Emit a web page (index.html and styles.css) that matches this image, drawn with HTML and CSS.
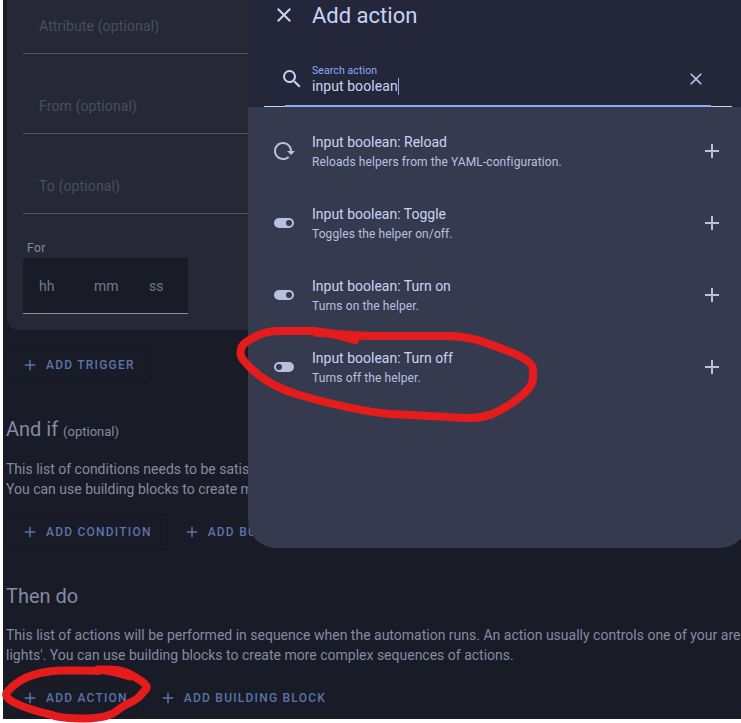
FILE: index.html
```html
<!DOCTYPE html>
<html lang="en">
<head>
<meta charset="utf-8">
<title>Automation editor</title>
<link rel="stylesheet" href="styles.css">
</head>
<body>
<svg class="defs" aria-hidden="true">
  <symbol id="plus" viewBox="0 0 24 24"><path d="M19,13H13V19H11V13H5V11H11V5H13V11H19V13Z"/></symbol>
  <symbol id="close" viewBox="0 0 24 24"><path d="M19,6.41L17.59,5L12,10.59L6.41,5L5,6.41L10.59,12L5,17.59L6.41,19L12,13.41L17.59,19L19,17.59L13.41,12L19,6.41Z"/></symbol>
  <symbol id="magnify" viewBox="0 0 24 24"><path d="M9.5,3A6.5,6.5 0 0,1 16,9.5C16,11.11 15.41,12.59 14.44,13.73L14.71,14H15.5L20.5,19L19,20.5L14,15.5V14.71L13.73,14.44C12.59,15.41 11.11,16 9.5,16A6.5,6.5 0 0,1 3,9.5A6.5,6.5 0 0,1 9.5,3M9.5,5C7,5 5,7 5,9.5C5,12 7,14 9.5,14C12,14 14,12 14,9.5C14,7 12,5 9.5,5Z"/></symbol>
  <symbol id="reload" viewBox="0 0 24 24"><path d="M2 12C2 16.97 6.03 21 11 21C13.39 21 15.68 20.06 17.4 18.4L15.9 16.9C14.63 18.25 12.86 19 11 19C4.76 19 1.64 11.46 6.05 7.05C10.46 2.64 18 5.77 18 12H15L19 16H19.1L23 12H20C20 7.03 15.97 3 11 3C6.03 3 2 7.03 2 12Z"/></symbol>
  <symbol id="switch-on" viewBox="0 0 24 24"><path d="M17,7H7A5,5 0 0,0 2,12A5,5 0 0,0 7,17H17A5,5 0 0,0 22,12A5,5 0 0,0 17,7M17,15A3,3 0 0,1 14,12A3,3 0 0,1 17,9A3,3 0 0,1 20,12A3,3 0 0,1 17,15Z"/></symbol>
  <symbol id="switch-off" viewBox="0 0 24 24"><path d="M17,7H7A5,5 0 0,0 2,12A5,5 0 0,0 7,17H17A5,5 0 0,0 22,12A5,5 0 0,0 17,7M7,15A3,3 0 0,1 4,12A3,3 0 0,1 7,9A3,3 0 0,1 10,12A3,3 0 0,1 7,15Z"/></symbol>
</svg>

<main class="editor">
  <section class="card">
    <div class="field">Attribute (optional)</div>
    <div class="field">From (optional)</div>
    <div class="field">To (optional)</div>
    <div class="for-label">For</div>
    <div class="duration"><span>hh</span><span>mm</span><span>ss</span></div>
  </section>
  <div class="buttons trigger">
    <button class="btn"><svg><use href="#plus"/></svg>ADD TRIGGER</button>
  </div>

  <h2>And if <small>(optional)</small></h2>
  <p>This list of conditions needs to be satisfied for the automation to run.<br>You can use building blocks to create more complex conditions.</p>
  <div class="buttons condition">
    <button class="btn"><svg><use href="#plus"/></svg>ADD CONDITION</button>
    <button class="btn flat"><svg><use href="#plus"/></svg>ADD BUILDING BLOCK</button>
  </div>

  <h2 class="then">Then do</h2>
  <p>This list of actions will be performed in sequence when the automation runs. An action usually controls one of your areas<br>lights'. You can use building blocks to create more complex sequences of actions.</p>
  <div class="buttons">
    <button class="btn"><svg><use href="#plus"/></svg>ADD ACTION</button>
    <button class="btn flat"><svg><use href="#plus"/></svg>ADD BUILDING BLOCK</button>
  </div>
</main>

<div class="dialog" role="dialog">
  <header>
    <div class="title-row"><svg class="icon"><use href="#close"/></svg><h1>Add action</h1></div>
    <div class="search">
      <svg class="icon"><use href="#magnify"/></svg>
      <div class="search-text">
        <span class="search-label">Search action</span>
        <span class="search-value">input boolean<i class="caret"></i></span>
      </div>
      <svg class="clear"><use href="#close"/></svg>
    </div>
  </header>
  <ul>
    <li><svg class="item-icon"><use href="#reload"/></svg><div class="item-text"><b>Input boolean: Reload</b><span>Reloads helpers from the YAML-configuration.</span></div><svg class="item-icon"><use href="#plus"/></svg></li>
    <li><svg class="item-icon"><use href="#switch-on"/></svg><div class="item-text"><b>Input boolean: Toggle</b><span>Toggles the helper on/off.</span></div><svg class="item-icon"><use href="#plus"/></svg></li>
    <li><svg class="item-icon"><use href="#switch-on"/></svg><div class="item-text"><b>Input boolean: Turn on</b><span>Turns on the helper.</span></div><svg class="item-icon"><use href="#plus"/></svg></li>
    <li><svg class="item-icon"><use href="#switch-off"/></svg><div class="item-text"><b>Input boolean: Turn off</b><span>Turns off the helper.</span></div><svg class="item-icon"><use href="#plus"/></svg></li>
  </ul>
</div>

<svg class="marks" viewBox="0 0 741 723">
  <path d="M317 333C333 332 342 337 355 340M315 331Q335 335 375 336H448C475 336 493 346 505 350C514 353 533 361 533 369V379C532 387 525 394 512 403C495 414 487 418 468 418C455 418 449 416.500 430 416L390 414C360 411 330 404 296 394C277 388 259 379 245 362C241 358 240.500 355 240.500 353C240.500 346 244 343 251 339C261 333 270 331 278 331H315"/>
  <path d="M98 669.500C110 671 117 672 130 676.500M98 671Q88 670.500 83 670.500H60C30 672 14 683 6.500 693C5 696 8 698 10 700C22 708 40 712 52 715C60 718 70 718.500 85 718.500C105 718 112 715 118 710C123 705 134 702 139 697L146 689C149 686 142 681 135 677C124 670 116 669 98 669.500"/>
</svg>
</body>
</html>
```
FILE: styles.css
```css
* { box-sizing: border-box; }
body {
  margin: 0;
  width: 741px;
  height: 723px;
  overflow: hidden;
  position: relative;
  background: #fff;
  font-family: Roboto, sans-serif;
  font-size: 14px;
}
.defs { position: absolute; width: 0; height: 0; }
svg { fill: currentColor; flex: none; }

.editor {
  margin-left: 3px;
  height: 719px;
  padding-left: 3px;
  overflow: hidden;
  background: #191b27;
  color: #868aa2;
}
.card {
  margin-left: 1px;
  height: 330px;
  padding-left: 16px;
  overflow: hidden;
  background: #262836;
  border-bottom-left-radius: 12px;
}
.field {
  height: 56px;
  margin-bottom: 24px;
  padding-left: 16px;
  line-height: 56px;
  color: #4b4e5f;
  letter-spacing: 0.13px;
  border-bottom: 1px solid #50525f;
}
.field:first-child { margin-top: -2px; }
.for-label {
  margin-top: 2px;
  height: 20px;
  padding: 3px 0 0 4px;
  font-size: 12px;
  line-height: 15px;
  letter-spacing: 0.4px;
}
.duration {
  display: flex;
  width: 165px;
  height: 56px;
  line-height: 56px;
  background: #191b27;
  border-bottom: 1px solid #8b8ea0;
  border-top-left-radius: 4px;
  color: #74778a;
}
.duration span { width: 55px; padding-left: 16px; }

.buttons { display: flex; }
.trigger { margin-top: 17px; margin-bottom: 32px; }
.btn {
  display: flex;
  align-items: center;
  height: 36px;
  padding: 0 15px 0 14px;
  border: 1px solid #161823;
  border-radius: 4px;
  background: none;
  color: #5b74a9;
  font: 500 12px Roboto, sans-serif;
  letter-spacing: 1.22px;
  white-space: nowrap;
}
.btn svg { width: 18px; height: 18px; margin-right: 7px; }
.flat { border-color: transparent; }

h2 {
  margin: 0;
  height: 28px;
  font-size: 20px;
  font-weight: 400;
  line-height: 28px;
}
h2 small { font-size: 13px; }
h2.then { margin-top: 32px; }
p { margin: 16px 0 15px; line-height: 20px; white-space: nowrap; }
h2.then + p { margin-top: 15px; }

.dialog {
  position: absolute;
  left: 248px;
  top: 0;
  width: 500px;
  height: 548px;
  overflow: hidden;
  border-radius: 0 0 28px 28px;
  background: #363a4e;
  color: #cad3f5;
}
header { height: 107px; background: #24273a; padding: 0 16px; }
.icon { width: 24px; height: 24px; }
.title-row { display: flex; align-items: center; height: 30px; padding-left: 8px; gap: 16px; }
h1 { margin: 0; font-size: 22px; font-weight: 400; }
.search {
  position: relative;
  display: flex;
  align-items: center;
  height: 56px;
  margin-top: 21px;
  padding: 0 26px 0 16px;
  gap: 8px;
  border-bottom: 1px solid #cad3f5;
}
.search::after {
  content: "";
  position: absolute;
  left: 21px;
  right: 21px;
  bottom: -1px;
  height: 2px;
  background: #8aadf4;
}
.search-text { flex: 1; display: flex; flex-direction: column; }
.search-label { font-size: 10.5px; line-height: 15px; letter-spacing: 0.1px; color: #8aadf4; }
.search-value { display: flex; align-items: center; line-height: 17px; letter-spacing: 0.07px; }
.caret { width: 1px; height: 17px; background: #8aadf4; }
.clear { width: 20px; height: 20px; color: #b8c0e0; }

ul { list-style: none; margin: 0; padding: 8px 24px; }
li { display: flex; align-items: center; height: 72px; gap: 16px; }
.item-icon { width: 24px; height: 24px; color: #b8c0e0; }
.item-text { flex: 1; display: flex; flex-direction: column; }
.item-text b { font-weight: 400; line-height: 20px; }
.item-text span { padding-top: 1px; margin-bottom: -1px; font-size: 12px; line-height: 18px; letter-spacing: 0.1px; color: #b8c0e0; }

.marks {
  position: absolute;
  left: 0;
  top: 0;
  width: 741px;
  height: 723px;
  fill: none;
  stroke: #e61c1c;
  stroke-width: 8;
  stroke-linecap: round;
  stroke-linejoin: round;
}
```
